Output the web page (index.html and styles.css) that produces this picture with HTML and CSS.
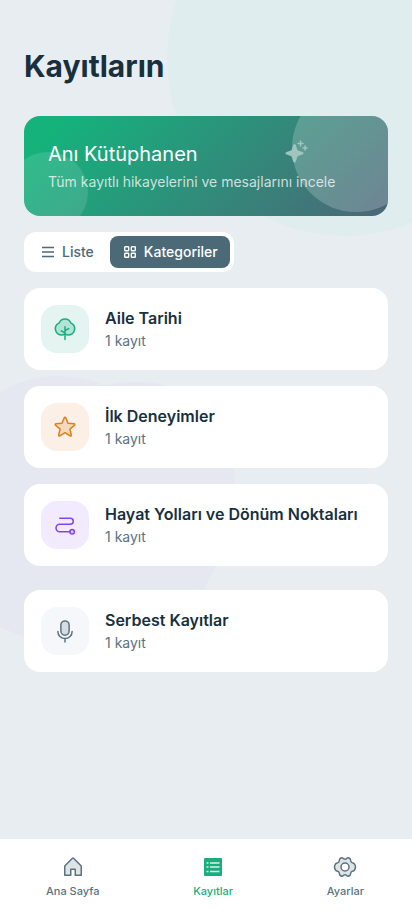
FILE: index.html
```
<!DOCTYPE html>
<html lang="tr">
<head>
<meta charset="utf-8">
<meta name="viewport" content="width=device-width, initial-scale=1">
<title>Kayıtların</title>
<link rel="stylesheet" href="styles.css">
</head>
<body>
<div class="app">
  <div class="blobs" aria-hidden="true">
    <span class="blob blob-mint"></span>
    <svg class="blob-lilac" viewBox="0 0 236 276"><path d="M0 22Q26 5 56 5Q82 5 104 14Q124 10 145 11Q190 14 215 55Q232 84 235 108Q234 165 203 220Q180 268 110 274Q40 276 0 256Z"/></svg>
  </div>

  <main class="page">
    <h1 class="title">Kayıtların</h1>

    <section class="hero">
      <span class="hero-circle hero-circle-right"></span>
      <span class="hero-circle hero-circle-left"></span>
      <div class="hero-text">
        <h2 class="hero-title">Anı Kütüphanen</h2>
        <p class="hero-sub">Tüm kayıtlı hikayelerini ve mesajlarını incele</p>
      </div>
      <svg class="hero-spark" viewBox="0 0 24 24" aria-hidden="true"><path d="M10.500 4Q11.600 4 12 5.500L13.300 9.700Q13.500 10.300 14.200 10.500L18.200 12Q19.600 12.500 19.600 13.200Q19.600 13.900 18.200 14.400L14.200 15.900Q13.500 16.100 13.300 16.700L12 21Q11.600 22.500 10.500 22.500Q9.400 22.500 9 21L7.700 16.700Q7.500 16.100 6.800 15.900L2.800 14.400Q1.400 13.900 1.400 13.200Q1.400 12.500 2.800 12L6.800 10.500Q7.500 10.300 7.700 9.700L9 5.500Q9.400 4 10.500 4Z"/><path class="spark-line" d="M16.500 1v5M14 3.500h5M21 6v4M19 8h4"/></svg>
    </section>

    <div class="toggle" role="group" aria-label="Görünüm">
      <button class="toggle-btn" type="button" aria-pressed="false">
        <svg class="icon-sm" viewBox="0 0 16 16" aria-hidden="true"><path d="M2 3.500h12M2 8h12M2 12.500h12"/></svg>
        Liste
      </button>
      <button class="toggle-btn is-active" type="button" aria-pressed="true">
        <svg class="icon-sm" viewBox="0 0 16 16" aria-hidden="true"><rect x="2.700" y="2.700" width="4" height="4" rx=".6"/><rect x="9.300" y="2.700" width="4" height="4" rx=".6"/><rect x="2.700" y="9.300" width="4" height="4" rx=".6"/><rect x="9.300" y="9.300" width="4" height="4" rx=".6"/></svg>
        Kategoriler
      </button>
    </div>

    <div class="list">
      <a class="card" href="#aile">
        <span class="tile tile-green"><svg class="icon" viewBox="0 0 256 256" aria-hidden="true"><path class="tint" d="M64 66A68 68 0 0 1 192 66A66 66 0 0 1 168 192A64 64 0 0 1 128 180A64 64 0 0 1 88 192A66 66 0 0 1 64 66Z"/><path d="M128 104V240M128 168L88 148M128 144L168 124"/></svg></span>
        <span class="card-text"><span class="card-title">Aile Tarihi</span><span class="card-sub">1 kayıt</span></span>
      </a>
      <a class="card" href="#ilk">
        <span class="tile tile-orange"><svg class="icon" viewBox="0 0 256 256" aria-hidden="true"><path class="tint" d="M128 189.090l54.720 33.650a8.400 8.400 0 0 0 12.520-9.170l-14.880-62.790 48.700-42A8.460 8.460 0 0 0 224.270 94L160.360 88.800 135.740 29.200a8.360 8.360 0 0 0-15.480 0L95.640 88.800 31.730 94a8.460 8.460 0 0 0-4.790 14.830l48.700 42L60.760 213.570a8.400 8.400 0 0 0 12.520 9.170Z"/></svg></span>
        <span class="card-text"><span class="card-title">İlk Deneyimler</span><span class="card-sub">1 kayıt</span></span>
      </a>
      <a class="card" href="#hayat">
        <span class="tile tile-violet"><svg class="icon" viewBox="0 0 256 256" aria-hidden="true"><circle class="tint" cx="204" cy="200" r="24"/><path d="M72 56h112a32 32 0 0 1 0 64H72a40 40 0 0 0 0 80H180"/></svg></span>
        <span class="card-text"><span class="card-title">Hayat Yolları ve Dönüm Noktaları</span><span class="card-sub">1 kayıt</span></span>
      </a>
      <a class="card card-free" href="#serbest">
        <span class="tile tile-slate"><svg class="icon" viewBox="0 0 256 256" aria-hidden="true"><rect class="tint" x="84" y="20" width="88" height="152" rx="44"/><path d="M128 208v36M204 132a76 76 0 0 1-152 0"/></svg></span>
        <span class="card-text"><span class="card-title">Serbest Kayıtlar</span><span class="card-sub">1 kayıt</span></span>
      </a>
    </div>
  </main>

  <nav class="tabs">
    <a class="tab" href="#ana">
      <svg class="icon" viewBox="0 0 256 256" aria-hidden="true"><path class="tint" d="M104 216V152h48v64h64V120a8 8 0 0 0-2.340-5.660l-80-80a8 8 0 0 0-11.320 0l-80 80A8 8 0 0 0 40 120v96Z"/></svg>
      Ana Sayfa
    </a>
    <a class="tab is-current" href="#kayitlar" aria-current="page">
      <svg class="icon" viewBox="0 0 24 24" aria-hidden="true"><rect class="solid" x="3" y="3" width="18" height="18" rx="1"/><path class="cut" d="M9 8h9.500M9 12h9.500M9 16.500h9.500M5.500 8h2M5.500 12h2M5.500 16.500h2"/></svg>
      Kayıtlar
    </a>
    <a class="tab" href="#ayarlar">
      <svg class="icon" viewBox="0 0 24 24" aria-hidden="true"><path class="tint gear" d="M6.800 3.900Q8 2.700 9.700 2.900Q10.500 4.200 12 4.200Q13.500 4.200 14.300 2.900Q16 2.700 17.200 3.900L17.900 6.400Q18.200 7.400 19.400 7.700Q21 8 21.600 9.200Q22.500 10.800 22.500 12Q22.500 13.200 21.600 14.800Q21 16 19.400 16.300Q18.200 16.600 17.900 17.600L17.200 20.100Q16 21.300 14.300 21.100Q13.500 19.800 12 19.800Q10.500 19.800 9.700 21.100Q8 21.300 6.800 20.100L6.100 17.600Q5.800 16.600 4.600 16.300Q3 16 2.400 14.800Q1.500 13.200 1.500 12Q1.500 10.800 2.400 9.200Q3 8 4.600 7.700Q5.800 7.400 6.100 6.400Z"/><circle class="hole" cx="12" cy="12" r="4"/></svg>
      Ayarlar
    </a>
  </nav>
</div>
</body>
</html>
```

FILE: styles.css
```
* { box-sizing: border-box; }

body {
  margin: 0;
  background: #e8edf1;
  color: #18303e;
  font-family: Inter, "Noto Sans", sans-serif;
}

h1, h2, p { margin: 0; font-weight: 400; }
a { color: inherit; text-decoration: none; }

.app {
  position: relative;
  display: flex;
  flex-direction: column;
  min-height: 100vh;
}

.blobs { position: absolute; inset: 0; overflow: hidden; }
.blob { position: absolute; border-radius: 50%; }
.blob-mint { width: 356px; height: 356px; top: -120px; left: 167px; background: #dfedee; }
.blob-lilac { position: absolute; left: 0; top: 371px; width: 236px; fill: #e5e8f1; }

.page { position: relative; flex: 1; padding: 48px 24px; }

.title { font-size: 30px; line-height: 36px; font-weight: 700; }

.hero {
  position: relative;
  overflow: hidden;
  margin-top: 32px;
  padding: 24px;
  border-radius: 16px;
  background: linear-gradient(135deg, #15b27c 10%, #4c6678 100%);
  color: #fff;
}
.hero-text { position: relative; }
.hero-title { font-size: 20px; line-height: 28px; }
.hero-sub { margin-top: 4px; font-size: 14px; line-height: 20px; color: rgba(255, 255, 255, .75); }
.hero-circle { position: absolute; border-radius: 50%; background: rgba(255, 255, 255, .2); }
.hero-circle-right { width: 128px; height: 128px; top: -32px; right: -32px; }
.hero-circle-left { width: 80px; height: 80px; bottom: -16px; left: -16px; background: rgba(255, 255, 255, .12); }
.hero-spark { position: absolute; top: 24px; right: 80px; width: 24px; height: 24px; fill: #a0c5bf; }
.spark-line { fill: none; stroke: #a0c5bf; stroke-width: 1.5; stroke-linecap: round; }

.toggle {
  display: inline-flex;
  gap: 4px;
  margin-top: 16px;
  padding: 4px;
  border-radius: 12px;
  background: #fff;
}
.toggle-btn {
  display: flex;
  align-items: center;
  gap: 6px;
  height: 32px;
  padding: 0 12px;
  border: 0;
  border-radius: 8px;
  background: none;
  color: #4c6978;
  font: 500 14px/20px Inter, sans-serif;
}
.toggle-btn.is-active { background: #4c6978; color: #fff; }
.icon-sm { width: 16px; height: 16px; fill: none; stroke: currentColor; stroke-width: 1.4; }

.list { display: flex; flex-direction: column; gap: 16px; margin-top: 16px; }
.card {
  display: flex;
  align-items: center;
  gap: 16px;
  padding: 17px;
  border-radius: 16px;
  background: #fff;
}
.card-free { margin-top: 8px; }
.card-text { display: flex; flex-direction: column; gap: 2px; }
.card-title { font-size: 16px; line-height: 22px; font-weight: 600; }
.card-sub { font-size: 14px; line-height: 20px; color: #5a7380; }

.tile {
  display: flex;
  align-items: center;
  justify-content: center;
  width: 48px;
  height: 48px;
  border-radius: 16px;
}
.tile-green { background: #e4f4f0; color: #1aae7d; }
.tile-green .tint { fill-opacity: .25; }
.tile-orange { background: #fcf0e6; color: #dc7f18; }
.tile-violet { background: #f2eafe; color: #8344ed; }
.tile-slate { background: #f5f7fb; color: #5a7380; }

.icon {
  width: 24px;
  height: 24px;
  fill: none;
  stroke: currentColor;
  stroke-width: 16;
  stroke-linecap: round;
  stroke-linejoin: round;
}
.tint { fill: currentColor; fill-opacity: .2; }

.tabs {
  position: relative;
  display: flex;
  justify-content: space-between;
  padding: 16px 48px 16px 46px;
  background: #fff;
}
.tab {
  display: flex;
  flex-direction: column;
  align-items: center;
  gap: 4px;
  color: #5a7380;
  font-size: 11px;
  line-height: 16px;
  font-weight: 500;
}
.is-current { color: #1aae7d; }
.solid { fill: currentColor; stroke: none; }
.cut { stroke: #d5f3e8; stroke-width: 1.5; stroke-linecap: butt; }
.gear { stroke-width: 1.5; }
.hole { fill: #fff; stroke-width: 1.5; }
```
